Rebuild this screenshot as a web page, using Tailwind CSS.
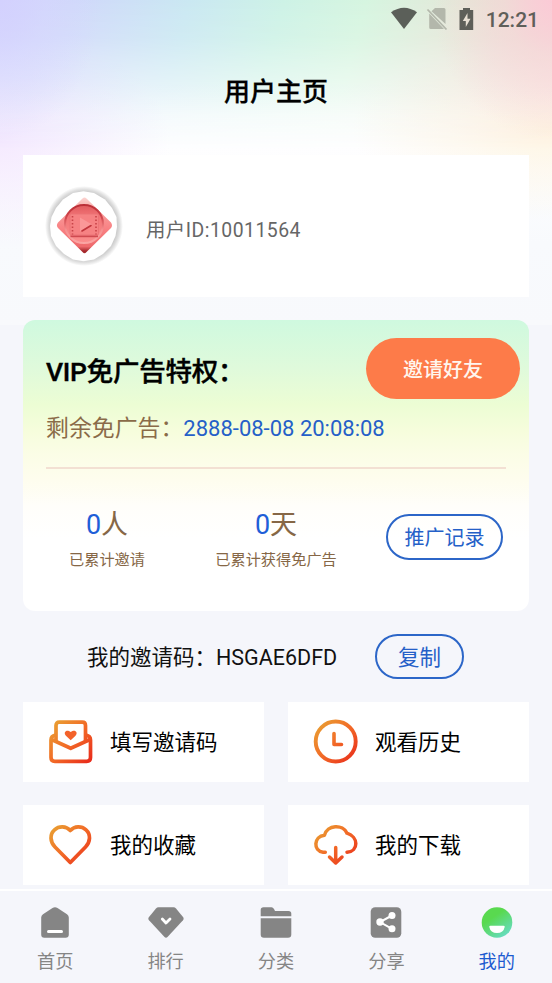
<!DOCTYPE html>
<html lang="zh-CN">
<head>
<meta charset="utf-8">
<meta name="viewport" content="width=device-width, initial-scale=1">
<title>用户主页</title>
<script src="https://cdn.jsdelivr.net/npm/@tailwindcss/browser@4"></script>
</head>
<body class="w-[552px] h-[983px] overflow-hidden bg-[#f5f6fb] font-[Roboto,'Noto_Sans_CJK_SC',sans-serif] text-black">
<div class="relative isolate flex h-[983px] flex-col">
  <!-- pastel backdrop -->
  <div class="absolute inset-x-0 top-0 -z-10 h-[325px] bg-[linear-gradient(180deg,#ffffff_0%,#fefeff_45%,#f8fafd_75%,#f8f9fc_100%)]">
    <div class="absolute inset-x-0 top-0 h-[260px] bg-[radial-gradient(ellipse_170px_110px_at_0px_140px,rgba(244,232,254,0.95),rgba(244,232,254,0.5)_45%,rgba(244,232,254,0)),radial-gradient(ellipse_200px_90px_at_552px_130px,rgba(254,245,226,1),rgba(254,245,226,0.5)_45%,rgba(254,245,226,0))]"></div>
    <div class="absolute inset-x-0 top-0 h-[150px] bg-[linear-gradient(105deg,#d3d1fd_0%,#cfdbf9_16%,#cae8f2_32%,#cdf2e6_48%,#d6f5e0_62%,#e6e6d8_80%,#fbcdd8_100%)] [mask-image:linear-gradient(180deg,rgba(0,0,0,1)_0%,rgba(0,0,0,0.88)_25%,rgba(0,0,0,0.55)_53%,rgba(0,0,0,0.18)_77%,rgba(0,0,0,0)_100%)]"></div>
    <div class="absolute left-0 top-0 h-[150px] w-[260px] bg-[radial-gradient(ellipse_100px_140px_at_0px_0px,rgba(211,209,254,0.9),rgba(213,214,254,0.5)_45%,rgba(215,222,254,0))]"></div>
    <div class="absolute right-0 top-0 h-[170px] w-[260px] bg-[radial-gradient(ellipse_120px_140px_at_260px_0px,rgba(252,201,214,0.9),rgba(243,214,212,0.55)_40%,rgba(246,232,214,0))]"></div>
  </div>

  <!-- status bar -->
  <div class="flex h-[38px] shrink-0 items-center justify-end pr-[13px] text-[#5f5f5a]">
    <svg class="mr-[8px]" width="28" height="24" viewBox="0 0 28 24"><path d="M1 5.2Q14-3.8 27 5.2L14 22Z" fill="#5b5f59"/></svg>
    <svg class="mr-[11px]" width="22" height="24" viewBox="0 0 22 24"><path d="M9 1h9q1.500 0 1.500 1.500V17L5.500 4.200ZM3.200 6.500 18 22H4.700q-1.500 0-1.500-1.500Z" fill="#b3b7ab"/><path d="M1.500 2.500 20.500 22.500" stroke="#b3b7ab" stroke-width="1.800"/></svg>
    <svg class="mr-[12px]" width="15" height="24" viewBox="0 0 15 24"><path d="M4 1h7v2h3.200v20H.5V3H4Z" fill="#5e5f59"/><path d="M8.500 6 3.800 14h3v6l4.700-8.200H8.500Z" fill="#e7dfd3"/></svg>
    <span class="pt-[2px] text-[21px] font-medium leading-6">12:21</span>
  </div>

  <h1 class="flex h-[117px] shrink-0 items-start justify-center pt-[34px] text-[26px] font-medium leading-10 [-webkit-text-stroke:0.3px_black]">用户主页</h1>

  <main class="flex flex-col px-[23px]">
    <!-- profile -->
    <section class="flex h-[142px] items-center bg-white pl-[21px]">
      <svg width="80" height="80" viewBox="-2 0 80 80">
        <defs>
          <linearGradient id="gem" x1="0" y1="0" x2="0" y2="1"><stop offset="0" stop-color="#fbd3d0"/><stop offset=".25" stop-color="#f79f9d"/><stop offset=".55" stop-color="#f98284"/><stop offset=".88" stop-color="#ee6a6c"/><stop offset=".96" stop-color="#a5292d"/></linearGradient>
          <linearGradient id="disc" x1="0" y1="0" x2="0" y2="1"><stop offset="0" stop-color="#e05a5e"/><stop offset=".3" stop-color="#f27476"/><stop offset="1" stop-color="#fb8f8e"/></linearGradient>
          <linearGradient id="rim" x1="0" y1="0" x2="0" y2="1"><stop offset="0" stop-color="#bb2f37"/><stop offset=".35" stop-color="#d34a50"/><stop offset=".65" stop-color="#f59090"/><stop offset="1" stop-color="#fba5a3"/></linearGradient>
          <radialGradient id="halo"><stop offset=".82" stop-color="#c4c4c4"/><stop offset=".91" stop-color="#dedede"/><stop offset="1" stop-color="#fff"/></radialGradient>
        </defs>
        <ellipse cx="38" cy="40" rx="39" ry="40" fill="url(#halo)"/>
        <path d="M37.500 5.300 48 7 59 13.500 66 22 70.500 31 71 41 69.500 50 65 60 57 68 48 73.500 37.500 75.300 27 73.500 18 68 10 60 5 50 4 40 5.500 31 10 22 17 13.500 27 7Z" fill="#fff"/>
        <path d="M36.500 12.500Q38.500 10.500 40.500 12.500L65 36.500Q67 39.300 65 42L40.500 66Q38.500 68.500 36.500 66L12 42Q9.800 39.300 12 36.500Z" fill="url(#gem)"/>
        <circle cx="38" cy="38" r="19" fill="url(#disc)" stroke="url(#rim)" stroke-width="2"/>
        <path d="M24.500 50.300H52" stroke="#cf4a50" stroke-width="1.800"/>
        <rect x="24" y="28" width="28.500" height="21" rx="1.500" fill="#f68283" stroke="#ea7274" stroke-width=".8"/>
        <path d="M26.500 30V48.500M50 30V48.500" stroke="#c74348" stroke-width="1.600" stroke-dasharray="1.600 1.900"/>
        <path d="M34 31.500 46 38.500 34 45.500Z" fill="#fa9898"/><path d="M36 45 45 39.500" stroke="#c0363c" stroke-width="1.600" stroke-linecap="round"/>
      </svg>
      <span class="ml-[22px] pt-[9px] text-[19.400px] leading-7 tracking-[0.48px] text-[#666]">用户ID:10011564</span>
    </section>

    <!-- VIP -->
    <section class="mt-[23px] flex h-[291px] flex-col rounded-[12px] bg-[linear-gradient(180deg,#cff9df_0%,#e0fadb_17%,#ecfdd4_29%,#f6fddc_38%,#fbfde6_46%,#fefdee_55%,#fffefa_64%,#ffffff_75%)] pl-[23px] pr-[9px] pt-[18px]">
      <div class="flex h-[61px] items-center justify-between">
        <h2 class="pt-[6px] text-[26.500px] font-medium leading-10 tracking-[-0.25px] [-webkit-text-stroke:0.4px_black]">VIP免广告特权：</h2>
        <button class="h-[61px] w-[154px] rounded-full bg-[#fd7b49] pt-[2px] text-[20px] font-medium text-[#fff6ee]">邀请好友</button>
      </div>
      <p class="mt-[13px] flex h-[34px] items-baseline text-[22.900px] leading-[34px] text-[#8a6b48]">剩余免广告：<span class="text-[22px] text-[#2560c8]">2888-08-08 20:08:08</span></p>
      <div class="mr-[14px] mt-[21px] h-[2px] bg-[#f3e0d3]"></div>
      <div class="mt-[38px] flex items-start text-[#866746]">
        <div class="w-[122px] text-center">
          <p class="text-[27px] leading-[36px]"><span class="text-[#1f5fd8]">0</span>人</p>
          <p class="mt-[6px] text-[15.200px] leading-[22px]">已累计邀请</p>
        </div>
        <div class="ml-[40px] w-[136px] text-center">
          <p class="text-[27px] leading-[36px]"><span class="text-[#1f5fd8]">0</span>天</p>
          <p class="mt-[6px] text-[15.200px] leading-[22px]">已累计获得免广告</p>
        </div>
        <button class="ml-[42px] mt-[7px] h-[46px] w-[117px] rounded-full border-2 border-[#2c66c8] pt-[2px] text-[20px] text-[#2560c8]">推广记录</button>
      </div>
    </section>

    <!-- invite code -->
    <div class="mt-[23px] flex h-[45px] items-center pl-[64px]">
      <span class="w-[288px] pt-[2px] text-[21.500px] leading-8 text-[#111]">我的邀请码：HSGAE6DFD</span>
      <button class="h-[45px] w-[89px] rounded-full border-2 border-[#2c66c8] pt-[2px] text-[21.500px] leading-8 text-[#2560c8]">复制</button>
    </div>

    <!-- shortcuts -->
    <div class="mt-[23px] grid grid-cols-2 gap-x-[24px] gap-y-[23px] text-[21.500px] leading-8">
      <a class="flex h-[80px] items-center bg-white pl-[24px]">
        <svg class="mr-[17px]" width="46" height="46" viewBox="0 0 46 46" fill="none" stroke-linejoin="round">
          <defs><linearGradient id="org" gradientUnits="userSpaceOnUse" x1="2" y1="4" x2="44" y2="44"><stop stop-color="#e8a433"/><stop offset=".5" stop-color="#f26a27"/><stop offset="1" stop-color="#e8281a"/></linearGradient></defs>
          <g stroke="url(#org)" stroke-width="3.700"><path d="M9 22V6.500Q9 3.200 12.300 3.200H35.200Q38.500 3.200 38.500 6.500V22"/><path d="M8.500 16Q4 17 4 21V38.500Q4 42.300 7.800 42.300H39.700Q43.500 42.300 43.500 38.500V21Q43.500 17 39 16"/><path d="M4.500 20.500 23.700 29.300 43 20.500"/></g>
          <path d="M23.700 21.300 18.900 16.800C15.800 13 19.700 9.800 23.700 13C27.700 9.800 31.600 13 28.500 16.800Z" fill="#f3622a"/>
        </svg><span class="pt-[2px]">填写邀请码</span></a>
      <a class="flex h-[80px] items-center bg-white pl-[24px]">
        <svg class="mr-[17px]" width="46" height="46" viewBox="0 0 46 46" fill="none" stroke="url(#org)"><circle cx="23.700" cy="22.500" r="20" stroke-width="3.900"/><path d="M22 14.500V25.500H29.500" stroke-width="3.600" stroke-linecap="round" stroke-linejoin="round"/></svg><span class="pt-[2px]">观看历史</span></a>
      <a class="flex h-[80px] items-center bg-white pl-[24px]">
        <svg class="mr-[17px]" width="46" height="46" viewBox="0 0 46 46" fill="none" stroke="url(#org)" stroke-width="3.700" stroke-linejoin="round"><path d="M23.300 40.500 8 25C3 19.800 2.500 12.300 7.500 7.800C12 3.800 19 3.800 23.300 8.500C27.500 3.800 34.500 3.800 39 7.800C44 12.300 43.500 19.800 38.500 25Z"/></svg><span class="pt-[2px]">我的收藏</span></a>
      <a class="flex h-[80px] items-center bg-white pl-[24px]">
        <svg class="mr-[17px]" width="46" height="46" viewBox="0 0 46 46" fill="none" stroke="url(#org)" stroke-width="3.500" stroke-linecap="round" stroke-linejoin="round"><path d="M13.300 30.200H11C1 29.200 1.500 14.200 12.500 13.200C15 2.700 31 1.700 35 11.200C46.500 14.700 47 29.200 35 30.200"/><path d="M23.700 25.500V40.500M17.500 35 23.700 41 30 35"/></svg><span class="pt-[2px]">我的下载</span></a>
    </div>
  </main>

  <!-- tabs -->
  <nav class="mt-auto grid h-[94px] shrink-0 grid-cols-5 border-t-2 border-white bg-[#f5f6fb] pt-[15px] text-center text-[18.200px] leading-[28px] text-[#858585]">
    <a class="flex flex-col items-center gap-[8px]"><svg width="36" height="34" viewBox="0 0 36 34"><path d="M15.500 2Q18 .3 20.500 2L30 8.300Q31.800 9.500 31.800 11.500V28.500Q31.800 31.700 28.600 31.700H7.400Q4.200 31.700 4.200 28.500V11.500Q4.200 9.500 6 8.300Z" fill="#858585"/><path d="M11.500 25.500H24.500" stroke="#fff" stroke-width="3" stroke-linecap="round"/></svg>首页</a>
    <a class="flex flex-col items-center gap-[8px]"><svg width="36" height="34" viewBox="0 0 36 34"><path d="M10.500 1.200H25.500Q27 1.200 28 2.400L35 11Q36.300 12.700 35 14.200L19.500 31Q18 32.500 16.500 31L1 14.200Q-.3 12.700 1 11L8 2.400Q9 1.200 10.500 1.200Z" fill="#858585"/><path d="M14.300 13 18 17 22 13" fill="none" stroke="#fff" stroke-width="2.800" stroke-linecap="round" stroke-linejoin="round"/></svg>排行</a>
    <a class="flex flex-col items-center gap-[8px]"><svg width="36" height="34" viewBox="0 0 36 34"><path d="M2.700 10.300V4Q2.700 1.200 5.500 1.200H13.500Q15 1.200 16 3L17 4.900H30.500Q33.300 4.900 33.300 7.700V10.300ZM2.700 12.300H33.300V28.500Q33.300 31.700 30 31.700H6Q2.700 31.700 2.700 28.500Z" fill="#858585"/></svg>分类</a>
    <a class="flex flex-col items-center gap-[8px]"><svg width="36" height="34" viewBox="0 0 36 34"><rect x="2.700" y="1.200" width="30.600" height="30.500" rx="4.500" fill="#858585"/><path d="M24 9.500 12 16 24 22.800" fill="none" stroke="#fff" stroke-width="2"/><g fill="#fff"><circle cx="24" cy="9.500" r="3.500"/><circle cx="12" cy="16" r="3.700"/><circle cx="24" cy="22.800" r="3.500"/></g></svg>分享</a>
    <a class="flex flex-col items-center gap-[8px] text-[#1c5bd0]"><svg width="36" height="34" viewBox="0 0 36 34"><defs><linearGradient id="face" x1=".2" y1="0" x2=".9" y2="1"><stop offset=".3" stop-color="#59d94f"/><stop offset="1" stop-color="#68dcd2"/></linearGradient></defs><circle cx="18" cy="16.500" r="15.300" fill="url(#face)"/><path d="M11.500 19.700H24.500Q26 19.700 25.700 21Q24.500 27 18 27T10.300 21Q10 19.700 11.500 19.700Z" fill="#fff"/></svg>我的</a>
  </nav>
</div>
</body>
</html>
